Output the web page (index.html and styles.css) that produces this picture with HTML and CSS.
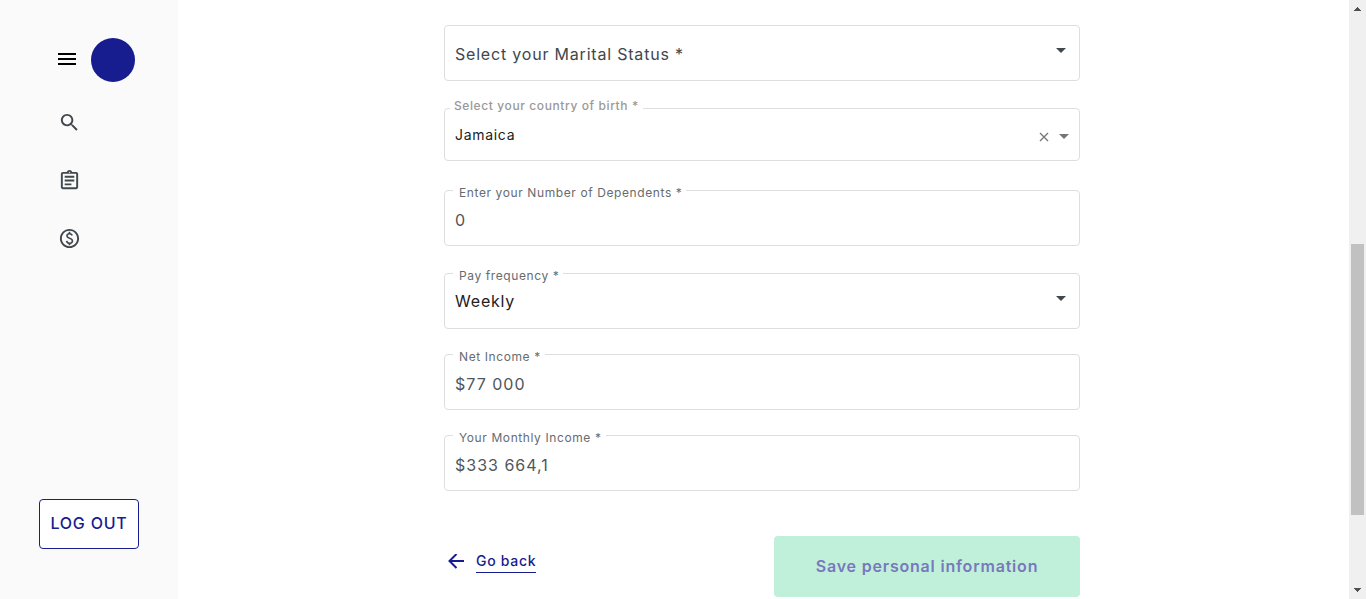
FILE: index.html
```html
<!DOCTYPE html>
<html lang="en">
<head>
<meta charset="utf-8">
<meta name="viewport" content="width=device-width, initial-scale=1">
<title>Personal information</title>
<link rel="stylesheet" href="styles.css">
</head>
<body>
<div class="app">
  <aside class="sidebar">
    <div class="brand">
      <button class="icon-button" type="button" aria-label="Menu">
        <svg class="menu-icon" viewBox="0 0 24 24"><path d="M3 17h18v-2H3v2zm0-5h18v-2H3v2zm0-7v2h18V5H3z"/></svg>
      </button>
      <span class="avatar"></span>
    </div>
    <nav class="nav">
      <a href="#search" aria-label="Search"><svg class="nav-icon" viewBox="0 0 24 24"><path d="M15.5 14h-.79l-.28-.27C15.41 12.59 16 11.11 16 9.5 16 5.91 13.09 3 9.5 3S3 5.91 3 9.5 5.91 16 9.5 16c1.61 0 3.09-.59 4.23-1.57l.27.28v.79l5 4.99L20.49 19l-4.99-5zm-6 0C7.01 14 5 11.99 5 9.5S7.01 5 9.5 5 14 7.01 14 9.5 11.99 14 9.5 14z"/></svg></a>
      <a href="#applications" aria-label="Applications"><svg class="nav-icon" viewBox="0 0 24 24"><path d="M7 15h7v2H7zm0-4h10v2H7zm0-4h10v2H7zm12-4h-4.18C14.4 1.84 13.3 1 12 1s-2.4.84-2.82 2H5c-1.1 0-2 .9-2 2v14c0 1.1.9 2 2 2h14c1.1 0 2-.9 2-2V5c0-1.1-.9-2-2-2zm-7-.25c.41 0 .75.34.75.75s-.34.75-.75.75-.75-.34-.75-.75.34-.75.75-.75zM19 19H5V5h14v14z"/></svg></a>
      <a href="#loans" aria-label="Loans"><svg class="nav-icon" viewBox="0 0 24 24"><path d="M12 2C6.48 2 2 6.48 2 12s4.48 10 10 10 10-4.48 10-10S17.52 2 12 2zm0 18c-4.41 0-8-3.59-8-8s3.59-8 8-8 8 3.59 8 8-3.59 8-8 8zm.89-8.9c-1.78-.59-2.64-.96-2.64-1.9 0-1.02 1.11-1.39 1.81-1.39 1.31 0 1.79.99 1.9 1.34l1.58-.67c-.15-.44-.82-1.91-2.66-2.23V5h-1.75v1.26c-2.6.56-2.62 2.85-2.62 2.96 0 2.27 2.25 2.91 3.35 3.31 1.58.56 2.28 1.07 2.28 2.03 0 1.13-1.05 1.61-1.98 1.61-1.82 0-2.34-1.87-2.4-2.09l-1.66.67c.63 2.19 2.28 2.78 3.02 2.96V19h1.75v-1.24c.52-.09 3.02-.59 3.02-3.22.01-1.39-.6-2.61-3-3.44z"/></svg></a>
    </nav>
    <button class="logout" type="button">LOG OUT</button>
  </aside>

  <main class="main">
    <form class="form">
      <div class="field">
        <select class="control control--empty" aria-label="Select your Marital Status">
          <option>Select your Marital Status *</option>
        </select>
        <svg class="caret" viewBox="0 0 10 5"><path d="M0 0l5 5 5-5z"/></svg>
      </div>
      <div class="field field--combo">
        <label class="label label--combo" for="country">Select your country of birth *</label>
        <input class="control control--combo" id="country" type="text" value="Jamaica">
        <button class="icon-button clear" type="button" aria-label="Clear"><svg class="clear-icon" viewBox="0 0 14 14"><path d="M3 3l8 8M11 3l-8 8"/></svg></button>
        <button class="icon-button open" type="button" aria-label="Open"><svg class="open-icon" viewBox="0 0 10 5"><path d="M0 0l5 5 5-5z"/></svg></button>
      </div>
      <div class="field">
        <label class="label" for="dependents">Enter your Number of Dependents *</label>
        <input class="control control--input" id="dependents" type="text" value="0">
      </div>
      <div class="field">
        <label class="label" for="frequency">Pay frequency *</label>
        <select class="control" id="frequency"><option>Weekly</option></select>
        <svg class="caret" viewBox="0 0 10 5"><path d="M0 0l5 5 5-5z"/></svg>
      </div>
      <div class="field field--amount">
        <label class="label" for="net">Net Income *</label>
        <input class="control control--input" id="net" type="text" value="$77 000">
      </div>
      <div class="field field--amount">
        <label class="label" for="monthly">Your Monthly Income *</label>
        <input class="control control--input" id="monthly" type="text" value="$333 664,1">
      </div>
      <div class="actions">
        <a class="back" href="#back">
          <svg class="back-icon" viewBox="0 0 16 16"><path d="M16 7H1.5M8.5 0L1.5 7l7 7"/></svg>
          <span class="back-text">Go back</span>
        </a>
        <button class="save" type="submit" disabled>Save personal information</button>
      </div>
    </form>
  </main>

  <div class="scrollbar" aria-hidden="true">
    <svg class="scroll-arrow" viewBox="0 0 7 4" shape-rendering="crispEdges"><path d="M3 0h1v1h1v1h1v1h1v1H0V3h1V2h1V1h1z"/></svg>
    <div class="scroll-track"><div class="scroll-thumb"></div></div>
    <svg class="scroll-arrow" viewBox="0 0 7 4" shape-rendering="crispEdges"><path d="M0 0h7v1H6v1H5v1H4v1H3V3H2V2H1V1H0z"/></svg>
  </div>
</div>
</body>
</html>
```

FILE: styles.css
```css
* {
  box-sizing: border-box;
  letter-spacing: 0.05em;
}

body {
  margin: 0;
  background: #fff;
  font-family: Inter, "Liberation Sans", sans-serif;
  font-size: 16px;
}

button,
input,
select {
  font: inherit;
}

.app {
  display: flex;
  height: 100vh;
  overflow: hidden;
}

/* Sidebar */
.sidebar {
  display: flex;
  flex-direction: column;
  flex: 0 0 178px;
  padding: 38px 39px 50px;
  background: #fafafa;
}

.brand {
  display: flex;
  align-items: center;
  gap: 12px;
  padding-left: 16px;
}

.icon-button {
  display: flex;
  padding: 0;
  border: 0;
  background: none;
}

.menu-icon {
  width: 24px;
  height: 24px;
}

.avatar {
  flex: 0 0 44px;
  height: 44px;
  border-radius: 50%;
  background: #171c8f;
}

.nav {
  display: flex;
  flex-direction: column;
  align-items: flex-start;
  gap: 35px;
  padding: 29px 19px;
}

.nav a {
  display: flex;
}

.nav-icon {
  width: 23px;
  height: 23px;
  fill: #40474d;
}

.logout {
  height: 50px;
  margin-top: auto;
  padding: 0 0 2px;
  border: 1px solid #171c8f;
  border-radius: 4px;
  background: #fff;
  color: #171c8f;
  font-weight: 500;
}

/* Form */
.main {
  flex: 1;
  padding: 25px 3px 0 0;
}

.form {
  max-width: 636px;
  margin: 0 auto;
}

.field {
  position: relative;
  display: flex;
  align-items: center;
  height: 56px;
  border: 1px solid #dedede;
  border-radius: 4px;
}

.field + .field {
  margin-top: 27px;
}

.field--combo {
  height: 53px;
}

.field--combo + .field {
  margin-top: 29px;
}

.field + .field--amount {
  margin-top: 25px;
}

.label {
  position: absolute;
  top: -6px;
  left: 8px;
  padding: 0 4px 0 6px;
  background: #fff;
  color: #666c70;
  font-size: 12px;
  line-height: 16px;
}

.label--combo {
  top: -11px;
  left: 5px;
  padding: 0 4px;
  color: #999;
  font-weight: 500;
}

.control {
  flex: 1;
  min-width: 0;
  height: 100%;
  padding: 0 10px;
  border: 0;
  outline: 0;
  background: none;
  color: #212121;
  appearance: none;
}

.control--empty {
  padding-top: 2px;
  color: #40474d;
}

.control--input {
  padding-top: 4px;
  color: #50565b;
  letter-spacing: 1px;
}

.control--combo {
  font-size: 14px;
}

.caret {
  position: absolute;
  top: 22px;
  right: 13px;
  width: 10px;
  height: 5px;
  fill: #40474d;
  pointer-events: none;
}

.clear {
  margin: 4px 8px 0 0;
}

.clear-icon {
  width: 14px;
  height: 14px;
  fill: none;
  stroke: #757575;
  stroke-width: 1.3;
}

.open {
  margin: 3px 10px 0 0;
}

.open-icon {
  width: 10px;
  height: 5px;
  fill: #757575;
}

.actions {
  display: flex;
  align-items: flex-start;
  justify-content: space-between;
  margin-top: 45px;
}

.back {
  display: flex;
  align-items: center;
  gap: 12px;
  padding: 14px 4px;
  color: #171c8f;
  font-size: 14px;
  font-weight: 500;
  text-decoration: none;
}

.back-icon {
  width: 16px;
  height: 16px;
  fill: none;
  stroke: currentColor;
  stroke-width: 2;
}

.back-text {
  border-bottom: 1px solid currentColor;
  line-height: 22px;
}

.save {
  width: 306px;
  height: 61px;
  padding: 0 0 2px;
  border: 0;
  border-radius: 4px;
  background: #c0f0d9;
  color: #7878bd;
  font-weight: 600;
}

/* Scrollbar */
.scrollbar {
  display: flex;
  flex-direction: column;
  align-items: center;
  flex: 0 0 17px;
  padding: 7px 0;
  background: #f0f0f0;
}

.scroll-arrow {
  width: 7px;
  height: 4px;
  fill: #505050;
}

.scroll-track {
  display: flex;
  flex: 1;
  padding: 233px 0 73px;
}

.scroll-thumb {
  width: 13px;
  background: #c1c1c1;
}
```
